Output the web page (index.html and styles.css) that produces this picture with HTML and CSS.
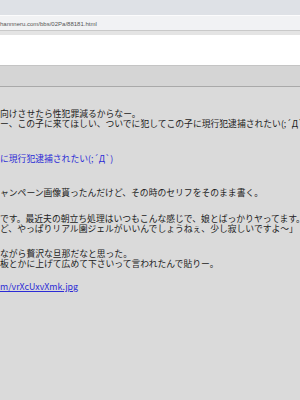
FILE: index.html
```html
<!DOCTYPE html>
<html lang="ja">
<head>
  <meta charset="UTF-8">
  <title>88181</title>
  <link rel="stylesheet" href="styles.css">
</head>
<body>

  <!-- Browser chrome -->
  <div class="toolbar"></div>
  <div class="addressbar">
    <span class="url">hannneru.com/bbs/02Pa/88181.html</span>
  </div>
  <div class="strip"></div>

  <!-- Page header -->
  <div class="banner"></div>
  <div class="bar"></div>

  <!-- Post body -->
  <div class="post">
    <p class="line">向けさせたら性犯罪減るからなー。<br>ー、この子に来てほしい、ついでに犯してこの子に現行犯逮捕されたい(;´Д`)</p>
    <p class="line quote">に現行犯逮捕されたい(;´Д`)</p>
    <p class="line">ャンペーン画像貰ったんだけど、その時のセリフをそのまま書く。</p>
    <p class="line small-gap first-gap">です。最近夫の朝立ち処理はいつもこんな感じで、娘とばっかりヤってます。<br>ど、やっぱりリアル園ジェルがいいんでしょうねぇ、少し寂しいですよ～」</p>
    <p class="line small-gap">ながら贅沢な旦那だなと思った。<br>板とかに上げて広めて下さいって言われたんで貼りー。</p>
    <p class="line small-gap last-gap"><a class="link" href="#">m/vrXcUxvXmk.jpg</a></p>
  </div>

</body>
</html>
```

FILE: styles.css
```css
html, body {
  margin: 0;
  padding: 0;
  overflow: hidden;
}

body {
  width: 300px;
  height: 400px;
  background: #dadada;
  font-family: "Noto Sans CJK JP", "Liberation Sans", sans-serif;
}

.toolbar {
  height: 15px;
  background: #dee1e6;
}

.addressbar {
  height: 13px;
  padding-top: 1px;
  box-sizing: content-box;
  background: #f1f2f4;
  border-top: 1px solid #fbfbfc;
  border-bottom: 1px solid #c9c9c9;
  display: flex;
  align-items: center;
}

.url {
  font-family: "Liberation Sans", sans-serif;
  font-size: 6px;
  color: #555;
  white-space: nowrap;
}

.strip {
  height: 4px;
  background: #e4e4e4;
}

.banner {
  height: 30px;
  background: #fff;
}

.bar {
  height: 20px;
  background: #d5d5d5;
  border-top: 1px solid #c4c4c4;
  border-bottom: 1px solid #a9a9a9;
}

.post {
  padding-top: 22px;
}

.line {
  margin: 25px 0 0;
  font-size: 8.8px;
  line-height: 10px;
  color: #222;
  white-space: nowrap;
}

.line:first-child {
  margin-top: 0;
}

.line.small-gap {
  margin-top: 15px;
}

.line.first-gap {
  margin-top: 16px;
}

.line.last-gap {
  margin-top: 13px;
}

.quote {
  color: #2b2bd6;
}

.quote + .line {
  margin-top: 24px;
}

.link {
  color: #2b2bd6;
  text-decoration: underline;
}
```
